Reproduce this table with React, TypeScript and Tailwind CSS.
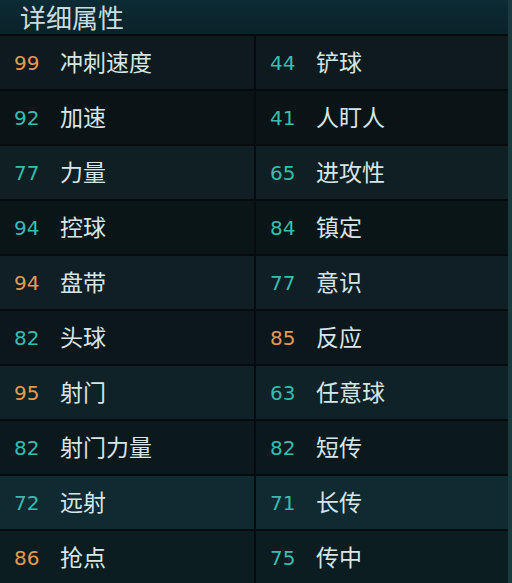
import React from 'react';

// left value, left label, right value, right label, orange flags, row bg
const rows = [
  { lv: 99, ll: '冲刺速度', lo: true, rv: 44, rl: '铲球', ro: false, bg: 'bg-[#0e1a1d]' },
  { lv: 92, ll: '加速', lo: false, rv: 41, rl: '人盯人', ro: false, bg: 'bg-[#0a1416]' },
  { lv: 77, ll: '力量', lo: false, rv: 65, rl: '进攻性', ro: false, bg: 'bg-[#0f1f24]' },
  { lv: 94, ll: '控球', lo: false, rv: 84, rl: '镇定', ro: false, bg: 'bg-[#0a1517]' },
  { lv: 94, ll: '盘带', lo: true, rv: 77, rl: '意识', ro: false, bg: 'bg-[#0f1f25]' },
  { lv: 82, ll: '头球', lo: false, rv: 85, rl: '反应', ro: true, bg: 'bg-[#0b171b]' },
  { lv: 95, ll: '射门', lo: true, rv: 63, rl: '任意球', ro: false, bg: 'bg-[#0f2227]' },
  { lv: 82, ll: '射门力量', lo: false, rv: 82, rl: '短传', ro: false, bg: 'bg-[#0b181c]' },
  { lv: 72, ll: '远射', lo: false, rv: 71, rl: '长传', ro: false, bg: 'bg-[#0f2a31]' },
  { lv: 86, ll: '抢点', lo: true, rv: 75, rl: '传中', ro: false, bg: 'bg-[#0c1d22]' }
];

const Cell: React.FC<{ value: number; label: string; orange: boolean }> = ({ value, label, orange }) => (
  <div className="flex items-center h-full">
    <span
      className={`w-[60px] shrink-0 pl-[14px] text-[20px] leading-none ${orange ? 'text-[#e59b52]' : 'text-[#36bdb0]'}`}
      style={{ fontFamily: '"DejaVu Sans", sans-serif' }}
    >
      {value}
    </span>
    <span className="text-[23px] leading-none text-[#d6e6e8] -mt-[2px]">{label}</span>
  </div>
);

export default function App() {
  return (
    <div
      className="w-[512px] h-[583px] overflow-hidden bg-[#1a3a40]"
      style={{ fontFamily: '"Noto Sans CJK SC", "Noto Sans", sans-serif' }}
    >
      <div className="w-[508px]">
        {/* Title */}
        <div className="h-[34px] bg-gradient-to-b from-[#0c2b34] to-[#0a222a] flex items-center pl-[20px]">
          <h1 className="text-[26px] leading-[32px] text-[#c9dde0] font-normal">详细属性</h1>
        </div>

        {/* Attribute rows */}
        {rows.map((r, i) => (
          <div key={i} className={`h-[55px] border-t-2 border-[#060c0e] grid grid-cols-[254px_2px_1fr] ${r.bg}`}>
            <Cell value={r.lv} label={r.ll} orange={r.lo} />
            <div className="bg-[#060c0e]" />
            <Cell value={r.rv} label={r.rl} orange={r.ro} />
          </div>
        ))}
      </div>
    </div>
  );
}
